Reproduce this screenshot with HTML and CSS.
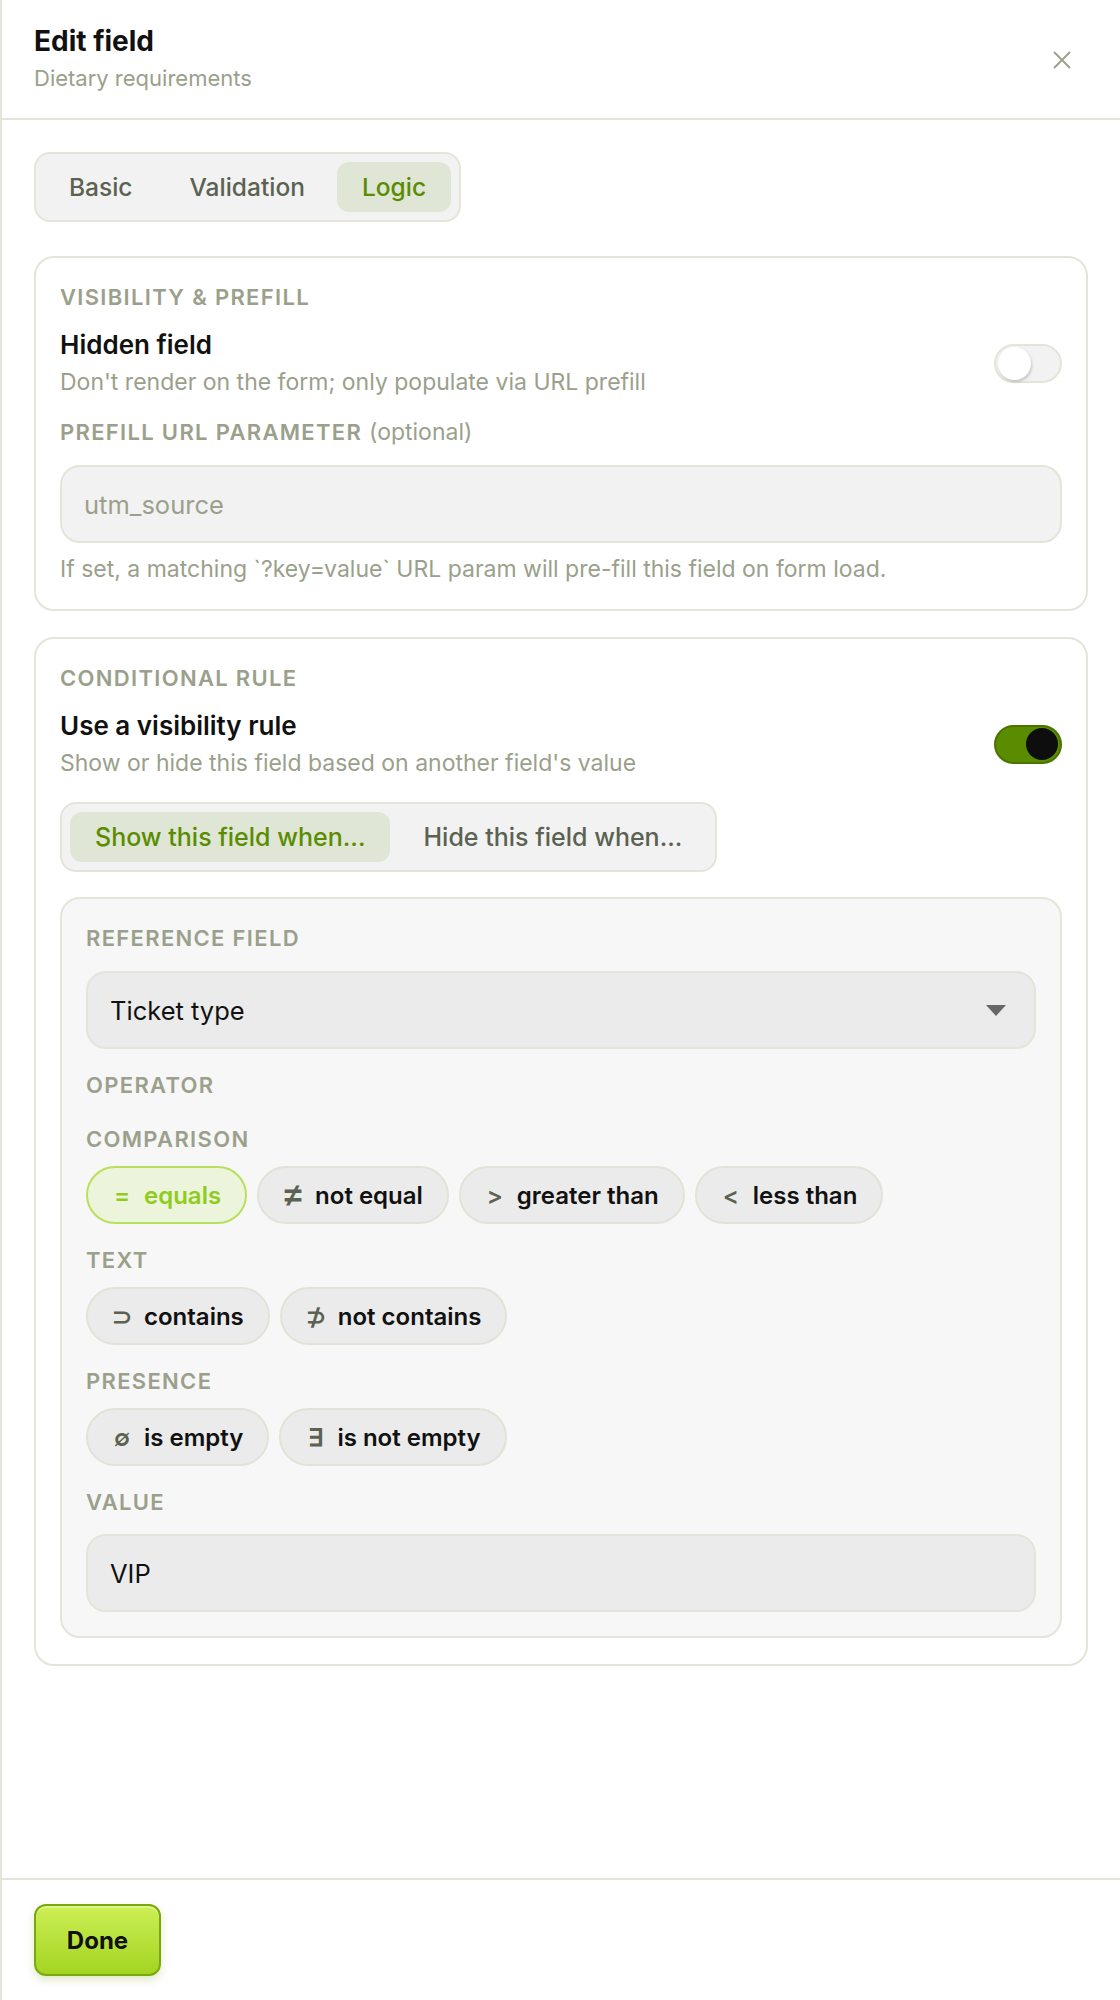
FILE: index.html
```html
<!DOCTYPE html>
<html lang="en">
<head>
  <meta charset="UTF-8">
  <title>Edit field</title>
  <link rel="stylesheet" href="styles.css">
</head>
<body>

  <div class="panel">
    <div class="panel-header">
      <div>
        <h2 class="panel-title">Edit field</h2>
        <div class="panel-subtitle">Dietary requirements</div>
      </div>
      <button class="close-btn" aria-label="Close">
        <svg width="18" height="18" viewBox="0 0 18 18"><path d="M1.5 1.5L16.5 16.5M16.5 1.5L1.5 16.5" stroke="currentColor" stroke-width="1.9" stroke-linecap="round"/></svg>
      </button>
    </div>

    <div class="panel-body">
      <div class="tabs">
        <button class="tab">Basic</button>
        <button class="tab">Validation</button>
        <button class="tab active">Logic</button>
      </div>

      <!-- hidden field + prefill -->
      <div class="card">
        <div class="section-label">VISIBILITY &amp; PREFILL</div>
        <div class="toggle-row">
          <div>
            <div class="toggle-title">Hidden field</div>
            <div class="toggle-desc">Don't render on the form; only populate via URL prefill</div>
          </div>
          <span class="switch"><span class="knob"></span></span>
        </div>
        <div class="section-label field-label">PREFILL URL PARAMETER <span class="optional">(optional)</span></div>
        <input class="text-input" placeholder="utm_source">
        <div class="hint">If set, a matching `?key=value` URL param will pre-fill this field on form load.</div>
      </div>

      <!-- conditional rule -->
      <div class="card">
        <div class="section-label">CONDITIONAL RULE</div>
        <div class="toggle-row">
          <div>
            <div class="toggle-title">Use a visibility rule</div>
            <div class="toggle-desc">Show or hide this field based on another field's value</div>
          </div>
          <span class="switch on"><span class="knob"></span></span>
        </div>

        <div class="segmented">
          <button class="seg active">Show this field when...</button>
          <button class="seg">Hide this field when...</button>
        </div>

        <div class="rule-box">
          <div class="section-label">REFERENCE FIELD</div>
          <div class="select-box">
            <span>Ticket type</span>
            <svg width="20" height="11" viewBox="0 0 20 11"><path d="M0 0H20L10 11Z" fill="#666"/></svg>
          </div>

          <div class="section-label group-label">OPERATOR</div>

          <div class="section-label sub-label">COMPARISON</div>
          <div class="chips">
            <button class="chip active"><span class="sym">=</span>equals</button>
            <button class="chip"><span class="sym sym-ne">≠</span>not equal</button>
            <button class="chip"><span class="sym">&gt;</span>greater than</button>
            <button class="chip"><span class="sym">&lt;</span>less than</button>
          </div>

          <div class="section-label sub-label">TEXT</div>
          <div class="chips">
            <button class="chip"><span class="sym">⊃</span>contains</button>
            <button class="chip"><span class="sym">⊅</span>not contains</button>
          </div>

          <div class="section-label sub-label">PRESENCE</div>
          <div class="chips">
            <button class="chip"><span class="sym">∅</span>is empty</button>
            <button class="chip"><span class="sym">∃</span>is not empty</button>
          </div>

          <div class="section-label sub-label value-label">VALUE</div>
          <input class="text-input dark" value="VIP">
        </div>
      </div>
    </div>

    <div class="panel-footer">
      <button class="done-btn">Done</button>
    </div>
  </div>

</body>
</html>
```

FILE: styles.css
```css
* {
  box-sizing: border-box;
}

body {
  margin: 0;
  font-family: Inter, 'Noto Sans', sans-serif;
  color: #111;
  background: #fff;
}

button {
  font-family: inherit;
  cursor: pointer;
}

.panel {
  height: 100vh;
  display: flex;
  flex-direction: column;
  border-left: 2px solid #e4e5da;
}

.panel-header {
  display: flex;
  justify-content: space-between;
  align-items: center;
  padding: 25px 38px 27px 32px;
  border-bottom: 2px solid #e4e5da;
}

.panel-title {
  margin: 0;
  font-size: 28px;
  line-height: 32px;
  font-weight: 700;
}

.panel-subtitle {
  margin-top: 8px;
  font-size: 22px;
  line-height: 26px;
  color: #9aa08b;
}

.close-btn {
  width: 40px;
  height: 40px;
  margin-top: 4px;
  display: flex;
  align-items: center;
  justify-content: center;
  border: none;
  background: none;
  color: #9aa08b;
  padding: 0;
}

.panel-body {
  flex: 1;
  padding: 32px;
}

/* top tabs */
.tabs {
  display: inline-flex;
  gap: 7px;
  padding: 8px;
  background: #f2f2f2;
  border: 2px solid #e4e5da;
  border-radius: 16px;
  margin-bottom: 34px;
}

.tab {
  height: 50px;
  padding: 0 25px;
  border: none;
  border-radius: 12px;
  background: none;
  font-size: 24.5px;
  font-weight: 500;
  color: #5b6251;
}

.tab.active {
  background: #dfe6d5;
  color: #5a8c00;
}

.card {
  border: 2px solid #e4e5da;
  border-radius: 20px;
  padding: 26px 24px 26px;
  margin-bottom: 26px;
}

.section-label {
  font-size: 22px;
  line-height: 26px;
  font-weight: 600;
  letter-spacing: 0.06em;
  color: #9aa08b;
}

.optional {
  font-weight: 400;
  letter-spacing: 0;
  font-size: 23px;
}

.toggle-row {
  display: flex;
  justify-content: space-between;
  align-items: center;
  margin-top: 20px;
}

.toggle-title {
  font-size: 26px;
  line-height: 30px;
  font-weight: 600;
}

.toggle-desc {
  margin-top: 8px;
  font-size: 23px;
  line-height: 28px;
  color: #9aa08b;
}

.switch {
  width: 68px;
  height: 39px;
  border-radius: 20px;
  border: 2px solid #e4e5da;
  background: #f2f2f2;
  display: flex;
  align-items: center;
  padding: 0 2px;
}

.knob {
  width: 33px;
  height: 33px;
  border-radius: 50%;
  background: #fff;
  box-shadow: 1px 2px 3px rgba(0, 0, 0, 0.18);
}

.switch.on {
  background: #5a8c00;
  border-color: #4a7300;
  justify-content: flex-end;
}

.switch.on .knob {
  width: 32px;
  height: 32px;
  background: #0e0e0e;
  box-shadow: none;
}

.field-label {
  margin-top: 23px;
}

.text-input {
  display: block;
  width: 100%;
  height: 78px;
  margin-top: 20px;
  padding: 0 22px;
  border: 2px solid #e4e5da;
  border-radius: 20px;
  background: #f2f2f2;
  font-family: inherit;
  font-size: 25.5px;
  color: #111;
  outline: none;
}

.text-input::placeholder {
  color: #9aa08b;
}

.text-input.dark {
  background: #ebebeb;
}

.hint {
  margin-top: 12px;
  font-size: 23px;
  line-height: 28px;
  color: #9aa08b;
}

/* show / hide switcher */
.segmented {
  display: inline-flex;
  gap: 8px;
  margin-top: 25px;
  padding: 8px;
  background: #f2f2f2;
  border: 2px solid #e4e5da;
  border-radius: 16px;
}

.seg {
  height: 50px;
  padding: 0 25px;
  border: none;
  border-radius: 12px;
  background: none;
  font-size: 25px;
  font-weight: 500;
  color: #5b6251;
}

.seg.active {
  background: #dfe6d5;
  color: #5a8c00;
}

.rule-box {
  margin-top: 25px;
  padding: 26px 24px 24px;
  background: #f7f7f7;
  border: 2px solid #e4e5da;
  border-radius: 20px;
}

.select-box {
  display: flex;
  justify-content: space-between;
  align-items: center;
  height: 78px;
  margin-top: 20px;
  padding: 0 28px 0 22px;
  background: #ebebeb;
  border: 2px solid #e4e5da;
  border-radius: 20px;
  font-size: 25.5px;
}

.group-label {
  margin-top: 23px;
}

.sub-label {
  margin-top: 23px;
}

.group-label + .sub-label {
  margin-top: 28px;
}

.chips {
  display: flex;
  flex-wrap: wrap;
  gap: 10px;
  margin-top: 14px;
}

.chip {
  height: 58px;
  display: flex;
  align-items: center;
  gap: 12px;
  padding: 0 24px;
  border: 2px solid #e2e3d8;
  border-radius: 999px;
  background: #ebebeb;
  font-size: 24px;
  font-weight: 600;
  color: #111;
}

.chip .sym {
  min-width: 20px;
  text-align: center;
  color: #5b6251;
}

.chip .sym-ne {
  font-family: 'Liberation Sans', sans-serif;
  font-size: 32px;
  font-weight: 700;
  line-height: 1;
}

.chip.active {
  background: #ecf5dc;
  border-color: #b8e05e;
  color: #8fcc1c;
}

.chip.active .sym {
  color: #8fcc1c;
}

.value-label + .text-input {
  margin-top: 19px;
}

.panel-footer {
  padding: 24px 32px;
  border-top: 2px solid #e4e5da;
}

.done-btn {
  width: 127px;
  height: 72px;
  border: 2px solid #7aa90c;
  border-radius: 12px;
  background: linear-gradient(#cdef55, #a3d422);
  box-shadow: 0 4px 8px rgba(110, 150, 0, 0.22), inset 0 2px 0 rgba(255, 255, 255, 0.35);
  font-size: 24px;
  font-weight: 700;
  color: #111;
}
```
